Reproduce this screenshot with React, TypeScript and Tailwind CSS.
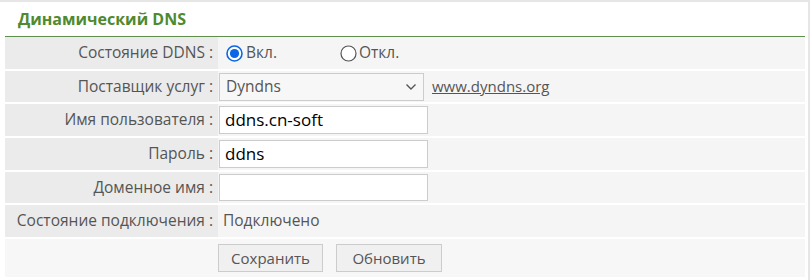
import React from "react";

const Row = ({ label, children, h }: { label: string; children: React.ReactNode; h: string }) => (
  <div className={`flex ${h} mb-[2px]`}>
    <div className="w-[213px] shrink-0 bg-[#ebebeb] flex items-center justify-end pr-[5px] text-[15.5px] text-[#555]">
      {label}
    </div>
    <div className="flex-1 bg-[#f5f5f5] flex items-center pl-[1px]">{children}</div>
  </div>
);

const Radio = ({ checked }: { checked?: boolean }) => (
  <svg width="17" height="17" viewBox="0 0 17 17">
    {checked ? (
      <>
        <circle cx="8.5" cy="8.5" r="7.5" fill="#fff" stroke="#0a66e4" strokeWidth="1.6" />
        <circle cx="8.5" cy="8.5" r="4.6" fill="#0a66e4" />
      </>
    ) : (
      <circle cx="8.5" cy="8.5" r="7.5" fill="#fff" stroke="#555" strokeWidth="1.2" />
    )}
  </svg>
);

export default function App() {
  return (
    <div
      className="w-[812px] h-[280px] bg-white overflow-hidden"
      style={{ fontFamily: '"Open Sans", "Noto Sans", sans-serif' }}
    >
      <div className="w-[810px] h-[280px] border-t-2 border-r-2 border-[#e6e6e6] pl-[5px] pr-[3px]">
        <div className="h-[35px] flex items-center pl-[13px] text-[16px] font-bold text-[#4f8a2f] border-b border-[#5f8f4c]">
          Динамический DNS
        </div>
        <Row label="Состояние DDNS :" h="h-[32px]">
          <div className="flex items-center pl-[7px]">
            <Radio checked />
            <span className="ml-[3px] text-[15.5px] text-[#555]">Вкл.</span>
            <div className="ml-[63px]">
              <Radio />
            </div>
            <span className="ml-[2px] text-[15.5px] text-[#555]">Откл.</span>
          </div>
        </Row>
        <Row label="Поставщик услуг :" h="h-[31px]">
          <div className="w-[205px] h-[28px] border border-[#ccc] bg-[#f7f7f7] flex items-center justify-between pl-[6px] pr-[6px] text-[15.5px] text-[#555]">
            <span>Dyndns</span>
            <svg width="12" height="8" viewBox="0 0 12 8">
              <path d="M1.5 1.5 L6 6 L10.5 1.5" fill="none" stroke="#555" strokeWidth="1.4" />
            </svg>
          </div>
          <span className="ml-[8px] text-[15px] text-[#555] underline">www.dyndns.org</span>
        </Row>
        <Row label="Имя пользователя :" h="h-[32px]">
          <div className="w-[209px] h-[28px] border border-[#ccc] bg-white flex items-center pl-[5px] text-[17px] text-black">
            ddns.cn-soft
          </div>
        </Row>
        <Row label="Пароль :" h="h-[32px]">
          <div className="w-[209px] h-[28px] border border-[#ccc] bg-white flex items-center pl-[5px] text-[17px] text-black">
            ddns
          </div>
        </Row>
        <Row label="Доменное имя :" h="h-[31px]">
          <div className="w-[209px] h-[27px] border border-[#ccc] bg-white" />
        </Row>
        <Row label="Состояние подключения :" h="h-[32px]">
          <span className="pl-[4px] text-[15.5px] text-[#555]">Подключено</span>
        </Row>
        <div className="h-[38px] bg-[#f7f7f7] flex items-center pl-[213px] gap-[13px]">
          <div className="w-[105px] h-[28px] border border-[#ccc] bg-[#f0f0f0] flex items-center justify-center text-[15px] text-[#555]">
            Сохранить
          </div>
          <div className="w-[106px] h-[28px] border border-[#ccc] bg-[#f0f0f0] flex items-center justify-center text-[15px] text-[#555]">
            Обновить
          </div>
        </div>
      </div>
    </div>
  );
}
